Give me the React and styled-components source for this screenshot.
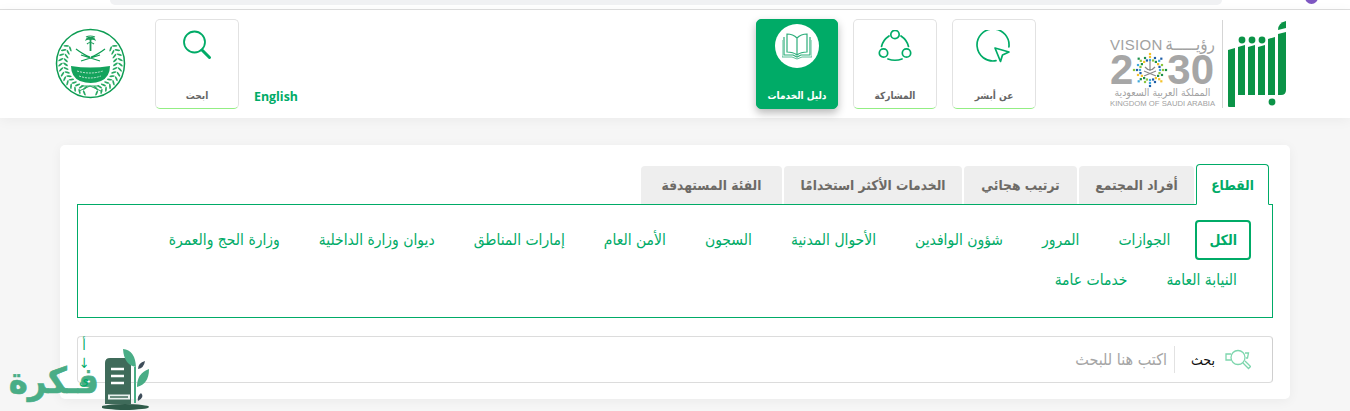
import React from 'react';
import styled, { createGlobalStyle } from 'styled-components';

const GREEN = '#00ab67';
const FONT = '"DejaVu Sans Condensed", "DejaVu Sans", sans-serif';

const GlobalStyle = createGlobalStyle`
  html, body {
    margin: 0;
    padding: 0;
    height: 411px;
    overflow: hidden;
    background: #f6f6f6;
    font-family: ${FONT};
  }
  * {
    box-sizing: border-box;
  }
`;

const Page = styled.div`
  position: relative;
  width: 1350px;
  height: 411px;
  overflow: hidden;
`;

const BrowserStrip = styled.div`
  height: 10px;
  background: #fff;
  border-bottom: 1px solid #dedede;
  display: flex;
  justify-content: space-between;
  padding: 0 32px 0 110px;
  overflow: hidden;
`;

const AddressBar = styled.div`
  width: 1112px;
  height: 5px;
  background: #f0f1f3;
  border-radius: 0 0 10px 10px;
`;

const ProfileDot = styled.div`
  width: 13px;
  height: 13px;
  margin-top: -9px;
  border-radius: 50%;
  background: #7e57c2;
`;

const Header = styled.header`
  direction: rtl;
  height: 108px;
  background: #fff;
  box-shadow: 0 2px 12px rgba(0, 0, 0, 0.05);
  display: flex;
  align-items: flex-start;
  padding: 9px 60px 0 55px;
`;

const Brand = styled.div`
  width: 180px;
  height: 90px;
  margin-left: 74px;
  padding-right: 4px;
  display: flex;
  align-items: center;
`;

const Divider = styled.div`
  width: 1px;
  height: 88px;
  margin: 0 5px 0 7px;
  background: #d5d5d5;
`;

const Vision = styled.div`
  direction: ltr;
  width: 105px;
  height: 71px;
  margin-top: 15px;
  display: flex;
  flex-direction: column;
  color: #a2a2a2;
  font-family: "Liberation Sans", sans-serif;
`;

const VisionTop = styled.div`
  display: flex;
  justify-content: space-between;
  align-items: center;
  height: 16px;
  font-size: 15px;
  letter-spacing: 0.3px;
`;

const VisionWord = styled.span`
  font-family: ${FONT};
  font-size: 17px;
  letter-spacing: 0;
  line-height: 16px;
`;

const VisionYear = styled.div`
  display: flex;
  align-items: center;
  height: 35px;
  font-size: 42px;
  font-weight: 700;
  line-height: 35px;
  color: #a6a6a6;
`;

const VisionArabic = styled.div`
  direction: rtl;
  height: 11px;
  font-family: ${FONT};
  font-size: 10.4px;
  line-height: 11px;
  text-align: center;
  white-space: nowrap;
`;

const VisionEnglish = styled.div`
  margin-top: 2px;
  font-size: 7.7px;
  line-height: 7px;
  white-space: nowrap;
`;

const NavGroup = styled.nav`
  display: flex;
  gap: 15px;
`;

const NavCard = styled.a`
  width: ${(p) => p.$width || 84}px;
  height: 90px;
  border-radius: 5px;
  display: flex;
  flex-direction: column;
  align-items: center;
  border: 1px solid ${(p) => (p.$active ? GREEN : '#e2e2e2')};
  border-bottom: 1px solid ${(p) => (p.$active ? GREEN : '#93ee84')};
  background: ${(p) => (p.$active ? GREEN : '#fff')};
  color: ${(p) => (p.$active ? '#fff' : '#666')};
  box-shadow: ${(p) => (p.$active ? '0 4px 9px rgba(0,0,0,0.28)' : 'none')};
`;

const NavIcon = styled.div`
  height: 56px;
  display: flex;
  align-items: center;
  justify-content: center;
`;

const NavLabel = styled.span`
  font-size: 10px;
  font-weight: 700;
  line-height: 14px;
  margin-top: 13px;
`;

const BookCircle = styled.div`
  width: 44px;
  height: 44px;
  margin-top: -4px;
  border-radius: 50%;
  background: #fff;
  display: flex;
  align-items: center;
  justify-content: center;
`;

const HeaderEnd = styled.div`
  margin-right: auto;
  display: flex;
  align-items: flex-start;
`;

const LangLink = styled.a`
  margin: 70px 0 0 15px;
  font-family: "Open Sans", "Liberation Sans", sans-serif;
  font-size: 12.4px;
  font-weight: 700;
  line-height: 16px;
  color: ${GREEN};
`;

const Seal = styled.div`
  margin: 9px 29px 0 0;
  width: 71px;
  height: 71px;
`;

const Card = styled.main`
  direction: rtl;
  width: 1230px;
  height: 254px;
  margin: 27px 0 0 60px;
  padding: 19px 17px 0;
  background: #fff;
  border-radius: 5px;
  box-shadow: 0 2px 12px rgba(0, 0, 0, 0.05);
`;

const TabRow = styled.div`
  display: flex;
  gap: 2px;
  height: 40px;
  padding-right: 4px;
  position: relative;
  z-index: 1;
`;

const Tab = styled.div`
  width: ${(p) => p.$width}px;
  height: ${(p) => (p.$active ? 41 : 38)}px;
  margin-top: ${(p) => (p.$active ? 0 : 2)}px;
  display: flex;
  align-items: center;
  justify-content: center;
  font-size: 13.7px;
  font-weight: 700;
  color: ${(p) => (p.$active ? GREEN : '#6d6a66')};
  background: ${(p) => (p.$active ? '#fff' : '#eeeeee')};
  border: ${(p) => (p.$active ? `1px solid ${GREEN}` : 'none')};
  border-bottom: ${(p) => (p.$active ? '1px solid #fff' : 'none')};
  border-radius: 4px 4px 0 0;
`;

const SectorBox = styled.div`
  height: 114px;
  border: 1px solid ${GREEN};
  padding: 15px 21px 0 0;
  display: flex;
  flex-wrap: wrap;
  align-content: flex-start;
`;

const Sector = styled.a`
  height: 40px;
  padding: 0 ${(p) => (p.$active ? 12 : 14)}px;
  margin-left: 11px;
  display: flex;
  align-items: center;
  font-size: ${(p) => (p.$active ? 14 : 15.5)}px;
  font-weight: ${(p) => (p.$active ? 700 : 400)};
  color: ${GREEN};
  border: ${(p) => (p.$active ? `2px solid ${GREEN}` : 'none')};
  border-radius: 4px;
`;

const SearchBar = styled.div`
  position: relative;
  height: 47px;
  margin-top: 18px;
  border: 1px solid #dcdcdc;
  border-right-color: #cfcfcf;
  border-radius: 4px;
  display: flex;
  align-items: center;
  padding-right: 21px;
`;

const SearchLabel = styled.span`
  margin: 0 10px 0 0;
  font-size: 14px;
  color: #111;
`;

const SearchSep = styled.div`
  width: 1px;
  height: 27px;
  margin: 0 16px 0 7px;
  background: #e2e2e2;
`;

const Placeholder = styled.span`
  font-size: 16px;
  color: #a5a5a5;
`;

const ClippedText = styled.div`
  position: absolute;
  left: 1px;
  top: 0;
  z-index: 2;
  width: 10px;
  font-size: 14px;
  line-height: 17.5px;
  color: ${GREEN};
  display: flex;
  flex-direction: column;
  align-items: center;
`;

const Watermark = styled.div`
  position: absolute;
  left: 0;
  bottom: 0;
  width: 152px;
  height: 62px;
  display: flex;
  align-items: flex-end;
  gap: 3px;
`;

const WatermarkText = styled.span`
  direction: rtl;
  width: 99px;
  height: 58px;
  font-size: 36px;
  font-weight: 700;
  line-height: 56px;
  color: #49ad86;
  -webkit-text-stroke: 0.6px #49ad86;
  white-space: nowrap;
`;

const CARD_ICON = { fill: 'none', stroke: GREEN, strokeWidth: 1.7, strokeLinecap: 'round' };

function AbsherLogo() {
  return (
    <svg width="58" height="90" viewBox="0 0 58 90">
      <g fill="#0b9347">
        <path d="M0 31l7-2v59H1q-1 0-1-1z" />
        <path d="M10 28l7-2v50h-7zM20 28l7-2v50h-7zM30 28l7-2v50h-7zM40 20l7-2v58h-7z" />
        <path d="M50 15l8-2v58q0 5-5 5h-3z" />
        <path d="M50 11q0-7 8-9v7z" />
        <circle cx="14" cy="21" r="3.400" />
        <circle cx="24" cy="21" r="3.400" />
        <circle cx="34" cy="21" r="3.400" />
        <circle cx="44" cy="83" r="3.400" />
      </g>
    </svg>
  );
}

function VisionStar() {
  const dots = [];
  const colors = ['#3fa9dd', '#8cc63f', '#1b8f4a', '#f4c22b', '#1f5fa8'];
  [10, 13, 16].forEach((r, ring) => {
    const n = [20, 16, 8][ring];
    for (let i = 0; i < n; i++) {
      const a = (i / n) * Math.PI * 2;
      dots.push(
        <rect key={`${r}-${i}`} x={18 + r * Math.cos(a) - 1.1} y={18 + r * Math.sin(a) - 1.1} width="2.200" height="2.200" fill={colors[(i + ring) % 5]} />
      );
    }
  });
  return (
    <svg width="36" height="36" viewBox="0 0 36 36" style={{ flex: 'none', margin: '0 -1px' }}>
      {dots}
      <path d="M18 9v10M13 15q5 6 10 0M12 24l12-5M24 24l-12-5" stroke="#8a8a8a" strokeWidth="1.200" fill="none" />
    </svg>
  );
}

function PointerIcon() {
  return (
    <svg width="36" height="36" viewBox="0 0 36 36" {...CARD_ICON}>
      <path d="M20 30.700A16 16 0 1 1 32.900 17" />
      <path d="M19 18l14 4-6.500 3-2 6.500z" strokeLinejoin="round" />
    </svg>
  );
}

function ShareIcon() {
  return (
    <svg width="36" height="36" viewBox="0 0 36 36" {...CARD_ICON}>
      <circle cx="18" cy="4.500" r="4.200" />
      <circle cx="6.500" cy="23" r="4.200" />
      <circle cx="29.500" cy="23" r="4.200" />
      <path d="M12 6Q6 10 4.500 16.500M24 6q6 4 7.500 10.500M11 29q7 2.500 14 0" />
    </svg>
  );
}

function BookIcon() {
  return (
    <svg width="30" height="28" viewBox="0 0 30 28" fill="none" stroke="#2eae7b" strokeWidth="1.200">
      <path d="M15 6Q11 2 5 2v18q6 0 10 3 4-3 10-3V2q-6 0-10 4zM15 6v17" />
      <path d="M2 5v18h9l4 2 4-2h9V5" />
      <path d="M0 8v17h10l5 2 5-2h10V8" strokeWidth="0.800" />
    </svg>
  );
}

function SearchIcon() {
  return (
    <svg width="30" height="36" viewBox="0 0 30 36" fill="none" stroke={GREEN}>
      <circle cx="12.500" cy="12" r="10.500" strokeWidth="1.800" />
      <path d="M20 20l7.500 7.500" strokeWidth="3" strokeLinecap="round" />
    </svg>
  );
}

function SearchBarIcon() {
  return (
    <svg width="26" height="22" viewBox="0 0 26 22" fill="none" stroke="#7dd6ad" strokeWidth="1.300">
      <circle cx="13" cy="8.500" r="7" />
      <path d="M18 14l5.500 5.500 2-2-5.500-5.500" />
      <path d="M6 5H1v6h5M20 4h3.500l-1 5H21" />
    </svg>
  );
}

function SealIcon() {
  const leaves = [];
  for (let i = 0; i < 13; i++) {
    const deg = 168 - i * 9.500;
    const a = deg * (Math.PI / 180);
    [-1, 1].forEach((side) => {
      [25, 30].forEach((r) => {
        const x = 35.500 + side * r * Math.sin(a);
        const y = 35.500 - r * Math.cos(a);
        const tilt = side * (deg + (r === 25 ? -35 : 35));
        leaves.push(
          <ellipse key={`${i}${side}${r}`} cx={x} cy={y} rx="0.900" ry="2.800" transform={`rotate(${tilt} ${x} ${y})`} fill="#27a862" />
        );
      });
    });
  }
  return (
    <svg width="71" height="71" viewBox="0 0 71 71" fill="none">
      <circle cx="35.500" cy="35.500" r="34" stroke="#0c9c52" strokeWidth="1.500" />
      {leaves}
      <path d="M35.500 11v12" stroke="#1b9c5a" strokeWidth="1.800" />
      <path d="M30 13q2-5 5.500-4 3.500-1 5.500 4-3-2-5.500-1-2.500-1-5.500 1z" fill="#1b9c5a" />
      <path d="M31 9q4-2 9 0M32 16q3-3 7 0" stroke="#1b9c5a" strokeWidth="1.200" />
      <path d="M21 21q8 6 14 8M50 21q-8 6-14 8M26 33l19-6M45 33l-19-6" stroke="#0c9c52" strokeWidth="1.200" />
      <path d="M16 38q19 3 39 0 0 11-9 15-10 4-21 0-9-4-9-15z" fill="#13a35c" />
      <path d="M22 43q13 4 26 0M24 48q11 4 22 0" stroke="#bfe6d1" strokeWidth="1" strokeDasharray="2 1" />
      <path d="M24 63l11-5 11 5M26 58h18" stroke="#27a862" strokeWidth="1" />
    </svg>
  );
}

function FikraLogo() {
  return (
    <svg width="50" height="62" viewBox="0 0 50 62">
      <path d="M3 14q0-5 5-5h16q5 0 5 5v41H3z" fill="#3f6b5a" />
      <path d="M9 20h13M9 27h13M9 34h13" stroke="#fff" strokeWidth="2.400" />
      <path d="M6 48h22" stroke="#e9f1ee" strokeWidth="5" />
      <path d="M8 48h18" stroke="#3f6b5a" strokeWidth="1.500" />
      <ellipse cx="23" cy="58" rx="24" ry="3" fill="#2f5b4a" />
      <path d="M33 54V34q0-12 0-16" stroke="#49ad86" strokeWidth="2" fill="none" />
      <path d="M21 0q12 1 13 18Q22 16 21 0zM35 38q0-14 12-18 0 15-12 18z" fill="#49ad86" />
      <path d="M36 20q0-6 7-8-1 7-7 8zM36 52q-1-5 3-8 4 4-3 8z" fill="#3f4d5a" />
    </svg>
  );
}

const tabs = [
  { label: 'القطاع', width: 73 },
  { label: 'أفراد المجتمع', width: 115 },
  { label: 'ترتيب هجائي', width: 113 },
  { label: 'الخدمات الأكثر استخدامًا', width: 178 },
  { label: 'الفئة المستهدفة', width: 141 },
];
const sectors = [
  'الكل', 'الجوازات', 'المرور', 'شؤون الوافدين', 'الأحوال المدنية', 'السجون', 'الأمن العام',
  'إمارات المناطق', 'ديوان وزارة الداخلية', 'وزارة الحج والعمرة', 'النيابة العامة', 'خدمات عامة',
];

export default function App() {
  return (
    <Page>
      <GlobalStyle />
      <BrowserStrip>
        <AddressBar />
        <ProfileDot />
      </BrowserStrip>
      <Header>
        <Brand>
          <AbsherLogo />
          <Divider />
          <Vision>
            <VisionTop>
              <span>VISION</span>
              <VisionWord>رؤيـــــة</VisionWord>
            </VisionTop>
            <VisionYear>
              2<VisionStar />30
            </VisionYear>
            <VisionArabic>المملكة العربية السعودية</VisionArabic>
            <VisionEnglish>KINGDOM OF SAUDI ARABIA</VisionEnglish>
          </Vision>
        </Brand>
        <NavGroup>
          <NavCard>
            <NavIcon><PointerIcon /></NavIcon>
            <NavLabel>عن أبشر</NavLabel>
          </NavCard>
          <NavCard>
            <NavIcon><ShareIcon /></NavIcon>
            <NavLabel>المشاركة</NavLabel>
          </NavCard>
          <NavCard $active $width={82}>
            <NavIcon>
              <BookCircle><BookIcon /></BookCircle>
            </NavIcon>
            <NavLabel>دليل الخدمات</NavLabel>
          </NavCard>
        </NavGroup>
        <HeaderEnd>
          <LangLink>English</LangLink>
          <NavCard>
            <NavIcon><SearchIcon /></NavIcon>
            <NavLabel>ابحث</NavLabel>
          </NavCard>
          <Seal><SealIcon /></Seal>
        </HeaderEnd>
      </Header>
      <Card>
        <TabRow>
          {tabs.map((t, i) => (
            <Tab key={t.label} $active={i === 0} $width={t.width}>{t.label}</Tab>
          ))}
        </TabRow>
        <SectorBox>
          {sectors.map((s, i) => (
            <Sector key={s} $active={i === 0}>{s}</Sector>
          ))}
        </SectorBox>
        <SearchBar>
          <SearchBarIcon />
          <SearchLabel>بحث</SearchLabel>
          <SearchSep />
          <Placeholder>اكتب هنا للبحث</Placeholder>
          <ClippedText>
            <span>أ</span>
            <span>↓</span>
            <span>ى</span>
          </ClippedText>
        </SearchBar>
      </Card>
      <Watermark>
        <WatermarkText>فـكرة</WatermarkText>
        <FikraLogo />
      </Watermark>
    </Page>
  );
}
